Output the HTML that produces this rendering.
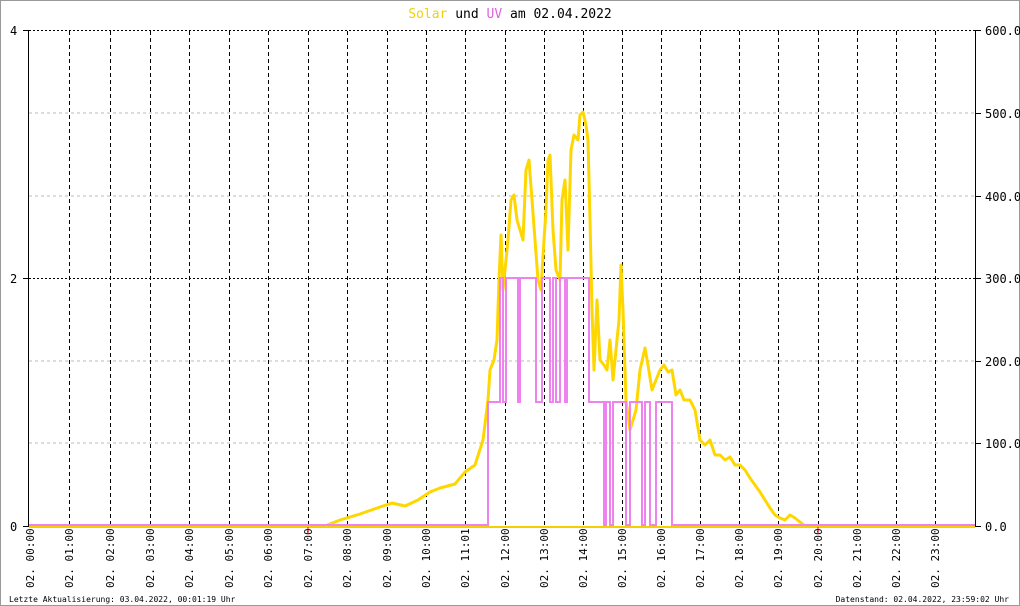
<!DOCTYPE html>
<html><head><meta charset="utf-8"><style>
html,body{margin:0;padding:0;background:#fff}
svg{display:block}
text{font-family:"DejaVu Sans Mono","Liberation Mono",monospace}
</style></head><body>
<svg width="1020" height="606" viewBox="0 0 1020 606" xmlns="http://www.w3.org/2000/svg">
<rect x="0.5" y="0.5" width="1019" height="605" fill="#fff" stroke="#999"/>
<text x="510" y="18" font-size="13" text-anchor="middle"><tspan fill="#f5d000">Solar</tspan> und <tspan fill="#e060e0">UV</tspan> am 02.04.2022</text>
<g stroke="#bbb" stroke-dasharray="3,3">
<line x1="29" y1="113" x2="975" y2="113"/><line x1="29" y1="196" x2="975" y2="196"/>
<line x1="29" y1="361" x2="975" y2="361"/><line x1="29" y1="443" x2="975" y2="443"/>
</g>
<g stroke="#000" stroke-dasharray="2,2">
<line x1="29" y1="30.5" x2="975" y2="30.5"/><line x1="29" y1="278.5" x2="975" y2="278.5"/>
</g>
<g stroke="#000" stroke-dasharray="4,3">
<line x1="69.5" y1="31" x2="69.5" y2="526"/><line x1="110.5" y1="31" x2="110.5" y2="526"/><line x1="150.5" y1="31" x2="150.5" y2="526"/><line x1="189.5" y1="31" x2="189.5" y2="526"/><line x1="229.5" y1="31" x2="229.5" y2="526"/><line x1="268.5" y1="31" x2="268.5" y2="526"/><line x1="308.5" y1="31" x2="308.5" y2="526"/><line x1="347.5" y1="31" x2="347.5" y2="526"/><line x1="387.5" y1="31" x2="387.5" y2="526"/><line x1="426.5" y1="31" x2="426.5" y2="526"/><line x1="465.5" y1="31" x2="465.5" y2="526"/><line x1="505.5" y1="31" x2="505.5" y2="526"/><line x1="544.5" y1="31" x2="544.5" y2="526"/><line x1="583.5" y1="31" x2="583.5" y2="526"/><line x1="622.5" y1="31" x2="622.5" y2="526"/><line x1="661.5" y1="31" x2="661.5" y2="526"/><line x1="700.5" y1="31" x2="700.5" y2="526"/><line x1="739.5" y1="31" x2="739.5" y2="526"/><line x1="778.5" y1="31" x2="778.5" y2="526"/><line x1="818.5" y1="31" x2="818.5" y2="526"/><line x1="857.5" y1="31" x2="857.5" y2="526"/><line x1="896.5" y1="31" x2="896.5" y2="526"/><line x1="935.5" y1="31" x2="935.5" y2="526"/>
</g>
<g stroke="#000">
<line x1="28.5" y1="30" x2="28.5" y2="526"/><line x1="975.5" y1="30" x2="975.5" y2="526"/>
<line x1="23" y1="30.5" x2="29" y2="30.5"/><line x1="23" y1="278.5" x2="29" y2="278.5"/><line x1="23" y1="526.5" x2="29" y2="526.5"/>
<line x1="975" y1="30.5" x2="981" y2="30.5"/><line x1="975" y1="113.5" x2="981" y2="113.5"/><line x1="975" y1="196.5" x2="981" y2="196.5"/><line x1="975" y1="278.5" x2="981" y2="278.5"/><line x1="975" y1="361.5" x2="981" y2="361.5"/><line x1="975" y1="443.5" x2="981" y2="443.5"/><line x1="975" y1="526.5" x2="981" y2="526.5"/>
</g>
<g font-size="12" fill="#000">
<text x="10" y="35">4</text><text x="10" y="283">2</text><text x="10" y="531">0</text>
<text x="985" y="35">600.0</text><text x="985" y="118">500.0</text><text x="985" y="201">400.0</text><text x="985" y="283">300.0</text><text x="985" y="366">200.0</text><text x="985" y="448">100.0</text><text x="985" y="531">0.0</text>
</g>
<line x1="29" y1="527" x2="975" y2="527" stroke="#f5d000" stroke-width="2"/>
<polyline fill="none" stroke="#ffd700" stroke-width="3" stroke-linejoin="round" points="325,526 340,520 360,514 380,507 392,503 405,506 418,500 430,492 440,488 455,484 465,472 475,465 483,440 488,400 490,370 494,360 497,340 499,280 501,235 503,290 505,270 508,240 511,200 514,195 517,220 520,230 523,240 526,170 529,160 532,200 535,240 538,280 541,290 544,240 546,210 548,160 550,155 553,230 556,270 560,280 562,200 565,180 568,250 571,150 574,135 578,140 580,115 583,112 586,125 588,140 590,220 592,310 594,370 597,300 600,360 604,365 607,370 610,340 613,380 616,350 619,320 621,265 623,310 626,400 630,430 633,420 636,410 640,370 645,348 648,365 652,390 656,380 660,370 664,365 668,372 672,370 676,395 680,390 684,400 690,400 695,410 700,440 705,445 710,440 715,455 720,455 725,460 730,457 735,465 740,465 745,470 750,478 755,485 760,492 765,500 770,508 775,515 780,518 785,520 790,515 795,518 800,522 805,526"/>
<polyline fill="none" stroke="#ee82ee" stroke-width="2" points="29,525 488,525 488,402 500,402 500,278 503,278 503,402 506,402 506,278 518,278 518,402 520,402 520,278 536,278 536,402 542,402 542,278 550,278 550,402 553,402 553,278 556,278 556,402 560,402 560,278 565,278 565,402 567,402 567,278 589,278 589,402 604,402 604,525 606,525 606,402 610,402 610,525 613,525 613,402 626,402 626,525 630,525 630,402 642,402 642,525 645,525 645,402 650,402 650,525 656,525 656,402 672,402 672,525 975,525"/>
<line x1="308" y1="527" x2="308" y2="533" stroke="red"/><line x1="818" y1="527" x2="818" y2="533" stroke="red"/>
<g font-size="11" fill="#000">
<text transform="translate(34,588) rotate(-90)">02. 00:00</text><text transform="translate(73,588) rotate(-90)">02. 01:00</text><text transform="translate(114,588) rotate(-90)">02. 02:00</text><text transform="translate(154,588) rotate(-90)">02. 03:00</text><text transform="translate(193,588) rotate(-90)">02. 04:00</text><text transform="translate(233,588) rotate(-90)">02. 05:00</text><text transform="translate(272,588) rotate(-90)">02. 06:00</text><text transform="translate(312,588) rotate(-90)">02. 07:00</text><text transform="translate(351,588) rotate(-90)">02. 08:00</text><text transform="translate(391,588) rotate(-90)">02. 09:00</text><text transform="translate(430,588) rotate(-90)">02. 10:00</text><text transform="translate(469,588) rotate(-90)">02. 11:01</text><text transform="translate(509,588) rotate(-90)">02. 12:00</text><text transform="translate(548,588) rotate(-90)">02. 13:00</text><text transform="translate(587,588) rotate(-90)">02. 14:00</text><text transform="translate(626,588) rotate(-90)">02. 15:00</text><text transform="translate(665,588) rotate(-90)">02. 16:00</text><text transform="translate(704,588) rotate(-90)">02. 17:00</text><text transform="translate(743,588) rotate(-90)">02. 18:00</text><text transform="translate(782,588) rotate(-90)">02. 19:00</text><text transform="translate(822,588) rotate(-90)">02. 20:00</text><text transform="translate(861,588) rotate(-90)">02. 21:00</text><text transform="translate(900,588) rotate(-90)">02. 22:00</text><text transform="translate(939,588) rotate(-90)">02. 23:00</text>
</g>
<g font-size="8" fill="#000">
<text x="9" y="602">Letzte Aktualisierung: 03.04.2022, 00:01:19 Uhr</text>
<text x="1009" y="602" text-anchor="end">Datenstand: 02.04.2022, 23:59:02 Uhr</text>
</g>
</svg>
</body></html>
